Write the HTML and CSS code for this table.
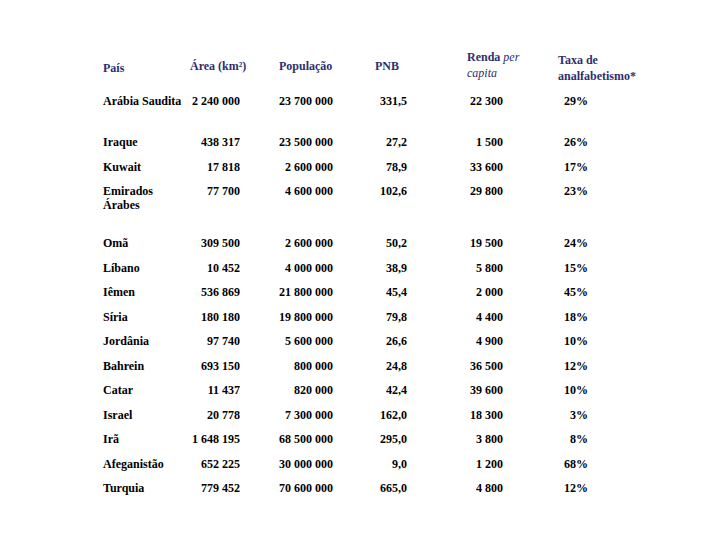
FILE: index.html
```html
<!DOCTYPE html>
<html lang="pt">
<head>
<meta charset="utf-8">
<title>Países do Oriente Médio</title>
<link rel="stylesheet" href="styles.css">
</head>
<body>
<div class="table">
  <div class="row head">
    <div class="h h-pais">País</div>
    <div class="h h-mid">Área (km²)</div>
    <div class="h h-mid">População</div>
    <div class="h h-mid">PNB</div>
    <div class="h h-renda">Renda <em>per<br>capita</em></div>
    <div class="h h-taxa">Taxa de<br>analfabetismo*</div>
  </div>
  <div class="row r-first"><div class="c">Arábia Saudita</div><div class="n">2 240 000</div><div class="n">23 700 000</div><div class="n">331,5</div><div class="n">22 300</div><div class="n">29%</div></div>
  <div class="row"><div class="c">Iraque</div><div class="n">438 317</div><div class="n">23 500 000</div><div class="n">27,2</div><div class="n">1 500</div><div class="n">26%</div></div>
  <div class="row"><div class="c">Kuwait</div><div class="n">17 818</div><div class="n">2 600 000</div><div class="n">78,9</div><div class="n">33 600</div><div class="n">17%</div></div>
  <div class="row r-tall"><div class="c">Emirados<br>Árabes</div><div class="n">77 700</div><div class="n">4 600 000</div><div class="n">102,6</div><div class="n">29 800</div><div class="n">23%</div></div>
  <div class="row"><div class="c">Omã</div><div class="n">309 500</div><div class="n">2 600 000</div><div class="n">50,2</div><div class="n">19 500</div><div class="n">24%</div></div>
  <div class="row"><div class="c">Líbano</div><div class="n">10 452</div><div class="n">4 000 000</div><div class="n">38,9</div><div class="n">5 800</div><div class="n">15%</div></div>
  <div class="row"><div class="c">Iêmen</div><div class="n">536 869</div><div class="n">21 800 000</div><div class="n">45,4</div><div class="n">2 000</div><div class="n">45%</div></div>
  <div class="row"><div class="c">Síria</div><div class="n">180 180</div><div class="n">19 800 000</div><div class="n">79,8</div><div class="n">4 400</div><div class="n">18%</div></div>
  <div class="row"><div class="c">Jordânia</div><div class="n">97 740</div><div class="n">5 600 000</div><div class="n">26,6</div><div class="n">4 900</div><div class="n">10%</div></div>
  <div class="row"><div class="c">Bahrein</div><div class="n">693 150</div><div class="n">800 000</div><div class="n">24,8</div><div class="n">36 500</div><div class="n">12%</div></div>
  <div class="row"><div class="c">Catar</div><div class="n">11 437</div><div class="n">820 000</div><div class="n">42,4</div><div class="n">39 600</div><div class="n">10%</div></div>
  <div class="row"><div class="c">Israel</div><div class="n">20 778</div><div class="n">7 300 000</div><div class="n">162,0</div><div class="n">18 300</div><div class="n">3%</div></div>
  <div class="row"><div class="c">Irã</div><div class="n">1 648 195</div><div class="n">68 500 000</div><div class="n">295,0</div><div class="n">3 800</div><div class="n">8%</div></div>
  <div class="row"><div class="c">Afeganistão</div><div class="n">652 225</div><div class="n">30 000 000</div><div class="n">9,0</div><div class="n">1 200</div><div class="n">68%</div></div>
  <div class="row"><div class="c">Turquia</div><div class="n">779 452</div><div class="n">70 600 000</div><div class="n">665,0</div><div class="n">4 800</div><div class="n">12%</div></div>
</div>
</body>
</html>
```

FILE: styles.css
```css
html, body {
  margin: 0;
  padding: 0;
  background: #ffffff;
}

body {
  width: 720px;
  height: 540px;
  overflow: hidden;
  font-family: "Liberation Serif", "Times New Roman", serif;
  font-size: 12px;
  font-weight: bold;
  color: #000000;
}

.table {
  display: flex;
  flex-direction: column;
  padding: 49px 0 0 103px;
}

.row {
  display: grid;
  grid-template-columns: 87px 89px 96px 92px 91px 92px;
  align-items: start;
  height: 24.5px;
  line-height: 14px;
  box-sizing: border-box;
}

.row.head {
  height: 45px;
  line-height: 16px;
  color: #2e2e6e;
}

.row.r-first {
  height: 41px;
}

.row.r-tall {
  height: 52px;
}

.h {
  white-space: nowrap;
}

.h em {
  font-weight: normal;
  font-style: italic;
}

.h-pais {
  margin-top: 11px;
}

.h-mid {
  margin-top: 9px;
}

.h-renda {
  margin-top: 0;
}

.h-taxa {
  margin-top: 3px;
}

.c {
  white-space: nowrap;
}

.n {
  text-align: right;
  white-space: nowrap;
}

.row .n:nth-child(2) { padding-right: 39px; }
.row .n:nth-child(3) { padding-right: 42px; }
.row .n:nth-child(4) { padding-right: 60px; }
.row .n:nth-child(5) { padding-right: 55px; }
.row .n:nth-child(6) { padding-right: 62px; }
```
